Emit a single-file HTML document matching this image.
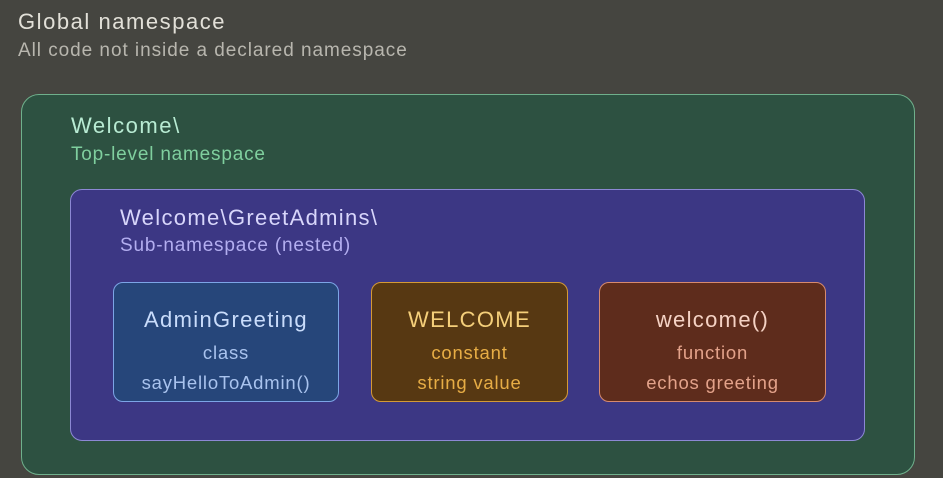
<!DOCTYPE html>
<html><head><style>
body{margin:0;width:943px;height:478px;background:#454540;font-family:"Liberation Sans",sans-serif;position:relative;overflow:hidden;letter-spacing:0.05em}
.a{position:absolute;white-space:nowrap}
.box{position:absolute;box-sizing:border-box}
.card{position:absolute;box-sizing:border-box;border-radius:10px;top:282px;height:120px;text-align:center}
.card .t{position:absolute;left:0;right:0;top:24px;font-size:22px;letter-spacing:0.06em}
.card .l1{position:absolute;left:0;right:0;top:59px;font-size:18.5px}
.card .l2{position:absolute;left:0;right:0;top:89px;font-size:18.5px}
</style></head><body>
<div class="a" style="left:18px;top:9px;font-size:22px;color:#e2e0d8;letter-spacing:0.07em">Global namespace</div>
<div class="a" style="left:18px;top:40px;font-size:19px;color:#b8b6ae;letter-spacing:0.05em">All code not inside a declared namespace</div>
<div class="box" style="left:21px;top:94px;width:894px;height:381px;background:#2d5141;border:1px solid #6fb08c;border-radius:18px"></div>
<div class="a" style="left:71px;top:113px;font-size:22px;color:#b8ebd3;letter-spacing:0.07em">Welcome\</div>
<div class="a" style="left:71px;top:144px;font-size:19px;color:#7fcf9e">Top-level namespace</div>
<div class="box" style="left:70px;top:189px;width:795px;height:252px;background:#3c3784;border:1px solid #8c88d4;border-radius:12px"></div>
<div class="a" style="left:120px;top:205px;font-size:22px;color:#d8d6fb;letter-spacing:0.06em">Welcome\GreetAdmins\</div>
<div class="a" style="left:120px;top:235px;font-size:19px;color:#b3aef0">Sub-namespace (nested)</div>
<div class="card" style="left:113px;width:226px;background:#26467a;border:1px solid #7ca5e6"><div class="t" style="color:#c9dcfb">AdminGreeting</div><div class="l1" style="color:#a9c3ee">class</div><div class="l2" style="color:#a9c3ee">sayHelloToAdmin()</div></div>
<div class="card" style="left:371px;width:197px;background:#573812;border:1px solid #d49a35"><div class="t" style="color:#f5cf7a">WELCOME</div><div class="l1" style="color:#e7ad45">constant</div><div class="l2" style="color:#e7ad45">string value</div></div>
<div class="card" style="left:599px;width:227px;background:#5e2c1c;border:1px solid #d78a6e"><div class="t" style="color:#f5d2c4">welcome()</div><div class="l1" style="color:#e3a28a">function</div><div class="l2" style="color:#e3a28a">echos greeting</div></div>
</body></html>
